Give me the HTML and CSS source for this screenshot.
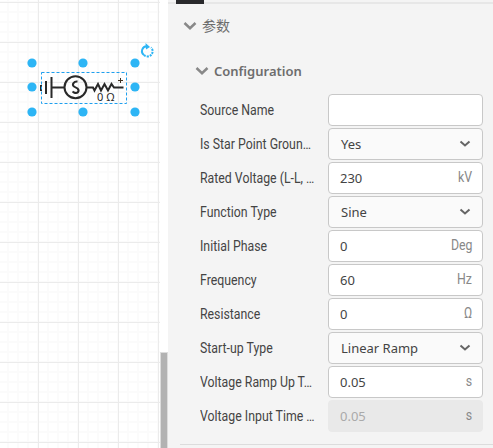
FILE: index.html
```html
<!DOCTYPE html>
<html lang="zh">
<head>
<meta charset="utf-8">
<title>参数</title>
<link rel="stylesheet" href="styles.css">
</head>
<body>
<div class="app">
  <main class="canvas">
    <svg class="diagram" width="160" height="448" viewBox="0 0 160 448">
      <g class="wire">
        <path d="M41 85v6" />
        <path d="M46 81v13M51.500 77v21M52 87.500h12M87 87.500h6l1.500 3 3.500-6.500 3 6.500 3.500-6.500 3.500 6.500 3.500-6.500 2.500 3.500h9.500" />
        <circle cx="75.500" cy="87.300" r="11" />
        <path d="M77.500 81.500C74 81 71.500 84.500 74 86.500L77.500 88.500C80 91 77.500 94 74 92.500L72.500 91.500" />
      </g>
      <path class="plus" d="M118 80.500h5M120.500 78v5" />
      <text class="ohm" x="97" y="101">0</text>
      <text class="ohm" x="106.500" y="101">Ω</text>
      <rect class="selection" x="41.500" y="72.500" width="85" height="31" />
      <g class="handles">
        <circle cx="32" cy="63" r="4.600"/><circle cx="83" cy="63" r="4.600"/><circle cx="135" cy="63" r="4.600"/>
        <circle cx="32" cy="87" r="4.600"/><circle cx="135" cy="87" r="4.600"/>
        <circle cx="32" cy="112" r="4.600"/><circle cx="83" cy="112" r="4.600"/><circle cx="135" cy="112" r="4.600"/>
      </g>
      <path class="rotate" d="M147 46.300A4.800 4.800 0 0 0 144 55" />
      <path class="rotate dotted" d="M144 55A4.800 4.800 0 0 0 151 47.500" />
      <path class="arrow" d="M145.500 43l4.500 4-4 2.500z" />
    </svg>
    <div class="track"><div class="thumb"></div></div>
  </main>
  <aside class="panel">
    <div class="tabs"><div class="active"></div></div>
    <h2 class="group"><svg width="14" height="10" viewBox="0 0 14 10"><path d="M1.500 2L7 7.200 12.500 2"/></svg><span>参数</span></h2>
    <h3 class="subgroup"><svg width="14" height="10" viewBox="0 0 14 10"><path d="M1.500 2L7 7.200 12.500 2"/></svg><span>Configuration</span></h3>
    <div class="fields">
      <div class="row"><div class="label"><span>Source Name</span></div><div class="field"></div></div>
      <div class="row"><div class="label"><span>Is Star Point Groun…</span></div><div class="field select"><span>Yes</span><svg width="12" height="8" viewBox="0 0 12 8"><path d="M1.500 1.500L6 5.500 10.500 1.500"/></svg></div></div>
      <div class="row"><div class="label"><span>Rated Voltage (L-L, …</span></div><div class="field"><span>230</span><span class="unit">kV</span></div></div>
      <div class="row"><div class="label"><span>Function Type</span></div><div class="field select"><span>Sine</span><svg width="12" height="8" viewBox="0 0 12 8"><path d="M1.500 1.500L6 5.500 10.500 1.500"/></svg></div></div>
      <div class="row"><div class="label"><span>Initial Phase</span></div><div class="field"><span>0</span><span class="unit">Deg</span></div></div>
      <div class="row"><div class="label"><span>Frequency</span></div><div class="field"><span>60</span><span class="unit">Hz</span></div></div>
      <div class="row"><div class="label"><span>Resistance</span></div><div class="field"><span>0</span><span class="unit">Ω</span></div></div>
      <div class="row"><div class="label"><span>Start-up Type</span></div><div class="field select"><span>Linear Ramp</span><svg width="12" height="8" viewBox="0 0 12 8"><path d="M1.500 1.500L6 5.500 10.500 1.500"/></svg></div></div>
      <div class="row"><div class="label"><span>Voltage Ramp Up T…</span></div><div class="field"><span>0.05</span><span class="unit">s</span></div></div>
      <div class="row"><div class="label"><span>Voltage Input Time …</span></div><div class="field disabled"><span>0.05</span><span class="unit">s</span></div></div>
    </div>
  </aside>
</div>
</body>
</html>
```
FILE: styles.css
```css
* { box-sizing: border-box; }
body { margin: 0; font-family: "Noto Sans", "Noto Sans CJK SC", sans-serif; color: #444; overflow: hidden; }
.app { display: flex; width: 493px; height: 448px; }
.canvas { display: flex; width: 168px; background: #fff; }
.diagram {
  display: block;
  background-image:
    linear-gradient(90deg, #ebebeb 1px, transparent 1px),
    linear-gradient(#ebebeb 1px, transparent 1px),
    linear-gradient(90deg, #fbfbfb 2px, transparent 2px),
    linear-gradient(#fbfbfb 2px, transparent 2px);
  background-size: 40px 40px, 40px 40px, 10px 10px, 10px 10px;
  background-position: 38px 0, 0 2px, 7px 0, 0 1px;
}
.wire { fill: none; stroke: #292929; stroke-width: 2; }
.plus { stroke: #443322; stroke-width: 1; }
.ohm { font: 11px "Noto Sans", sans-serif; fill: #292929; }
.selection { fill: none; stroke: #1e9fee; stroke-width: 1; stroke-dasharray: 3 2; }
.handles { fill: #2db5f5; }
.rotate { fill: none; stroke: #2db5f5; stroke-width: 2; }
.dotted { stroke-dasharray: 2 1; }
.arrow { fill: #2db5f5; }
.track { width: 8px; padding-top: 352px; }
.thumb { height: 96px; background: #b2b2b2; border: 1px solid #dcdcdc; border-bottom: 0; }
.panel { width: 325px; height: 448px; background: #f4f4f4; }
.tabs { height: 4px; padding-left: 8px; background: linear-gradient(#f4f4f4 2px, #e7e7e7 2px); }
.active { width: 28px; height: 4px; background: #29292c; }
.group, .subgroup { display: flex; align-items: center; margin: 0; color: #6d6d6d; }
.group { height: 43px; padding-left: 15px; gap: 5px; font-size: 14px; font-weight: 400; }
.group span { margin-top: -2px; }
.subgroup { height: 47px; padding-left: 27px; gap: 5px; font-size: 13px; font-weight: 600; }
.group svg path, .subgroup svg path { fill: none; stroke: #888; stroke-width: 2.500; }
.fields { display: grid; gap: 2px; margin-left: 12px; padding: 0 10px 12px 20px; border-bottom: 1px solid #dcdcdc; }
.row { display: flex; align-items: center; height: 32px; }
.label { width: 128px; flex: none; font: 14px "Roboto", sans-serif; white-space: nowrap; }
.label span { display: inline-block; transform: scaleX(.88); transform-origin: 0 50%; }
.field { display: flex; align-items: center; justify-content: space-between; width: 155px; height: 32px; padding: 1px 10px 1px 11px; border: 1px solid #c8c8c8; border-radius: 4px; background: #fff; font-size: 13px; }
.select { padding: 0 11px 0 12px; background: #fafafa; }
.select path { fill: none; stroke: #666; stroke-width: 2; }
.unit { position: relative; top: -1px; font: 14px "Roboto", sans-serif; color: #888; transform: scaleX(.88); transform-origin: 100% 50%; }
.disabled { background: #e9e9e9; border-color: #e9e9e9; color: #aaa; }
```
